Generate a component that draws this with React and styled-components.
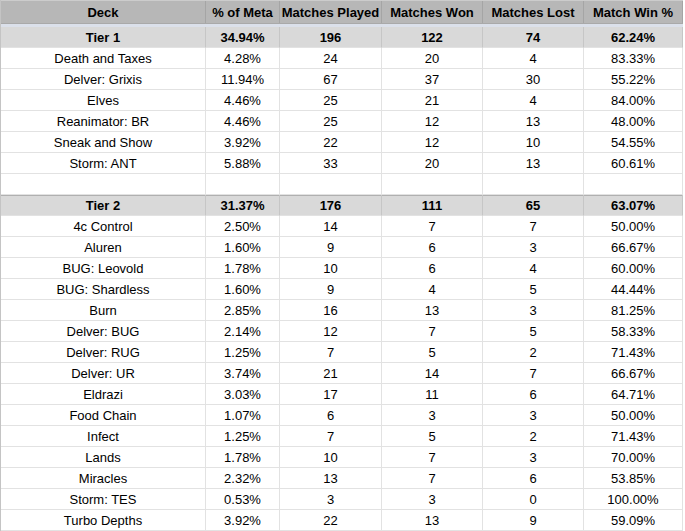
import React from "react";
import styled, { createGlobalStyle, css } from "styled-components";

const Global = createGlobalStyle`
  html, body { margin: 0; padding: 0; background: #ffffff; }
  body { font-family: "Liberation Sans", Arial, sans-serif; }
`;

const Sheet = styled.div`
  display: flex;
  flex-direction: column;
  width: 683px;
  border-left: 1px solid #c4c4c4;
  box-sizing: border-box;
  font-family: "Liberation Sans", Arial, sans-serif;
  font-size: 13px;
  color: #000;
`;

const Row = styled.div`
  display: grid;
  grid-template-columns: 205px 74px 102px 101px 101px 99px;
  height: 21px;
  ${(p) =>
    p.$variant === "header" &&
    css`
      height: 23px;
      background: #b7b7b7;
      border-top: 1px solid #cccccc;
      box-sizing: border-box;
    `}
  ${(p) =>
    p.$variant === "tier" &&
    css`
      background: #d9d9d9;
    `}
  ${(p) =>
    p.$topRule &&
    css`
      box-shadow: inset 0 1px 0 #b0b0b0;
    `}
`;

const FreezeBar = styled.div`
  height: 3px;
  width: 682px;
  background: #dbe0ea;
  border-top: 1px solid #a9a9a9;
  box-sizing: content-box;
`;

const Cell = styled.div`
  display: flex;
  align-items: center;
  justify-content: center;
  box-sizing: border-box;
  border-right: 1px solid ${(p) => (p.$variant === "header" ? "#a5a5a5" : p.$variant === "tier" ? "#c6c6c6" : "#e2e2e2")};
  border-bottom: ${(p) => (p.$variant === "header" ? "none" : "1px solid #e2e2e2")};
  font-weight: ${(p) => (p.$variant === "header" || p.$variant === "tier" ? 700 : 400)};
  white-space: nowrap;
  overflow: hidden;
  padding-top: 1px;
`;

const headers = ["Deck", "% of Meta", "Matches Played", "Matches Won", "Matches Lost", "Match Win %"];

const rows = [
  { v: "tier", c: ["Tier 1", "34.94%", "196", "122", "74", "62.24%"] },
  { c: ["Death and Taxes", "4.28%", "24", "20", "4", "83.33%"] },
  { c: ["Delver: Grixis", "11.94%", "67", "37", "30", "55.22%"] },
  { c: ["Elves", "4.46%", "25", "21", "4", "84.00%"] },
  { c: ["Reanimator: BR", "4.46%", "25", "12", "13", "48.00%"] },
  { c: ["Sneak and Show", "3.92%", "22", "12", "10", "54.55%"] },
  { c: ["Storm: ANT", "5.88%", "33", "20", "13", "60.61%"] },
  { c: ["", "", "", "", "", ""] },
  { v: "tier", top: true, c: ["Tier 2", "31.37%", "176", "111", "65", "63.07%"] },
  { c: ["4c Control", "2.50%", "14", "7", "7", "50.00%"] },
  { c: ["Aluren", "1.60%", "9", "6", "3", "66.67%"] },
  { c: ["BUG: Leovold", "1.78%", "10", "6", "4", "60.00%"] },
  { c: ["BUG: Shardless", "1.60%", "9", "4", "5", "44.44%"] },
  { c: ["Burn", "2.85%", "16", "13", "3", "81.25%"] },
  { c: ["Delver: BUG", "2.14%", "12", "7", "5", "58.33%"] },
  { c: ["Delver: RUG", "1.25%", "7", "5", "2", "71.43%"] },
  { c: ["Delver: UR", "3.74%", "21", "14", "7", "66.67%"] },
  { c: ["Eldrazi", "3.03%", "17", "11", "6", "64.71%"] },
  { c: ["Food Chain", "1.07%", "6", "3", "3", "50.00%"] },
  { c: ["Infect", "1.25%", "7", "5", "2", "71.43%"] },
  { c: ["Lands", "1.78%", "10", "7", "3", "70.00%"] },
  { c: ["Miracles", "2.32%", "13", "7", "6", "53.85%"] },
  { c: ["Storm: TES", "0.53%", "3", "3", "0", "100.00%"] },
  { c: ["Turbo Depths", "3.92%", "22", "13", "9", "59.09%"] },
];

export default function App() {
  return (
    <>
      <Global />
      <Sheet>
        <Row $variant="header">
          {headers.map((h) => (
            <Cell key={h} $variant="header">{h}</Cell>
          ))}
        </Row>
        <FreezeBar />
        {rows.map((r, i) => (
          <Row key={i} $variant={r.v} $topRule={r.top}>
            {r.c.map((t, j) => (
              <Cell key={j} $variant={r.v}>{t}</Cell>
            ))}
          </Row>
        ))}
      </Sheet>
    </>
  );
}
